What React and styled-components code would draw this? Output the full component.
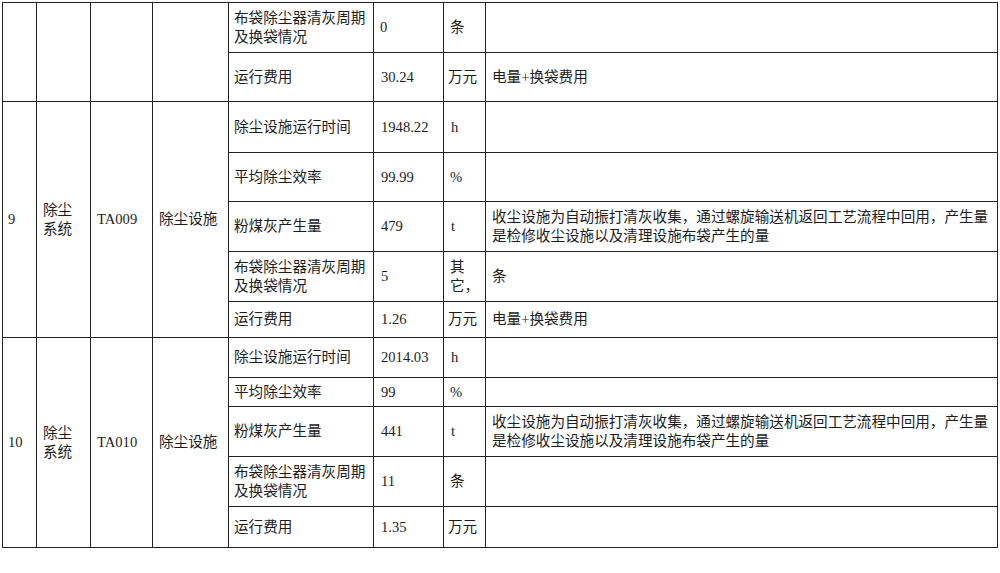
import React from "react";
import styled, { createGlobalStyle } from "styled-components";

const GlobalStyle = createGlobalStyle`
  html, body {
    margin: 0;
    padding: 0;
    background: #ffffff;
  }
  body {
    font-family: "Liberation Serif", "Noto Sans CJK SC", serif;
    color: #1c1c1c;
  }
`;

const Page = styled.div`
  padding: 2px 0 0 2px;
  width: 1000px;
  height: 573px;
  box-sizing: border-box;
  overflow: hidden;
`;

const Table = styled.table`
  border-collapse: collapse;
  table-layout: fixed;
  width: 996px;
  font-size: 14.6px;
  line-height: 19px;
  border-bottom: 1.5px solid #222;
`;

const Row = styled.tr`
  height: ${(p) => p.$h}px;
`;

const Cell = styled.td`
  border: 1px solid #222;
  padding: 0 0 0 ${(p) => p.$pad || 5}px;
  vertical-align: middle;
  text-align: left;
  white-space: nowrap;
  overflow: hidden;
`;

const cols = [34, 54, 62, 76, 145, 70, 42, 512];

const dustRemark = (
  <>
    收尘设施为自动振打清灰收集，通过螺旋输送机返回工艺流程中回用，产生量
    <br />
    是检修收尘设施以及清理设施布袋产生的量
  </>
);

const bagLabel = (
  <>
    布袋除尘器清灰周期
    <br />
    及换袋情况
  </>
);

const Group = ({ no, code, heights, values }) => (
  <>
    <Row $h={heights[0]}>
      <Cell rowSpan={5}>{no}</Cell>
      <Cell rowSpan={5} $pad={6}>
        除尘
        <br />
        系统
      </Cell>
      <Cell rowSpan={5} $pad={6}>{code}</Cell>
      <Cell rowSpan={5} $pad={6}>除尘设施</Cell>
      <Cell>除尘设施运行时间</Cell>
      <Cell $pad={7}>{values.time}</Cell>
      <Cell $pad={7}>h</Cell>
      <Cell></Cell>
    </Row>
    <Row $h={heights[1]}>
      <Cell>平均除尘效率</Cell>
      <Cell $pad={7}>{values.eff}</Cell>
      <Cell $pad={6}>%</Cell>
      <Cell></Cell>
    </Row>
    <Row $h={heights[2]}>
      <Cell>粉煤灰产生量</Cell>
      <Cell $pad={7}>{values.ash}</Cell>
      <Cell $pad={7}>t</Cell>
      <Cell $pad={6}>{dustRemark}</Cell>
    </Row>
    <Row $h={heights[3]}>
      <Cell>{bagLabel}</Cell>
      <Cell $pad={7}>{values.bag}</Cell>
      <Cell $pad={6}>{values.bagUnit}</Cell>
      <Cell $pad={6}>{values.bagNote}</Cell>
    </Row>
    <Row $h={heights[4]}>
      <Cell>运行费用</Cell>
      <Cell $pad={7}>{values.cost}</Cell>
      <Cell $pad={4}>万元</Cell>
      <Cell $pad={6}>{values.costNote}</Cell>
    </Row>
  </>
);

export default function App() {
  return (
    <Page>
      <GlobalStyle />
      <Table>
        <colgroup>
          {cols.map((w, i) => (
            <col key={i} style={{ width: w }} />
          ))}
        </colgroup>
        <tbody>
          <Row $h={50}>
            <Cell rowSpan={2}></Cell>
            <Cell rowSpan={2}></Cell>
            <Cell rowSpan={2}></Cell>
            <Cell rowSpan={2}></Cell>
            <Cell>{bagLabel}</Cell>
            <Cell $pad={6}>0</Cell>
            <Cell $pad={6}>条</Cell>
            <Cell></Cell>
          </Row>
          <Row $h={49}>
            <Cell>运行费用</Cell>
            <Cell $pad={7}>30.24</Cell>
            <Cell $pad={4}>万元</Cell>
            <Cell $pad={6}>电量+换袋费用</Cell>
          </Row>
          <Group
            no="9"
            code="TA009"
            heights={[51, 49, 50, 50, 36]}
            values={{
              time: "1948.22",
              eff: "99.99",
              ash: "479",
              bag: "5",
              bagUnit: (
                <>
                  其<br />它，
                </>
              ),
              bagNote: "条",
              cost: "1.26",
              costNote: "电量+换袋费用",
            }}
          />
          <Group
            no="10"
            code="TA010"
            heights={[40, 29, 50, 50, 41]}
            values={{
              time: "2014.03",
              eff: "99",
              ash: "441",
              bag: "11",
              bagUnit: "条",
              bagNote: "",
              cost: "1.35",
              costNote: "",
            }}
          />
        </tbody>
      </Table>
    </Page>
  );
}
